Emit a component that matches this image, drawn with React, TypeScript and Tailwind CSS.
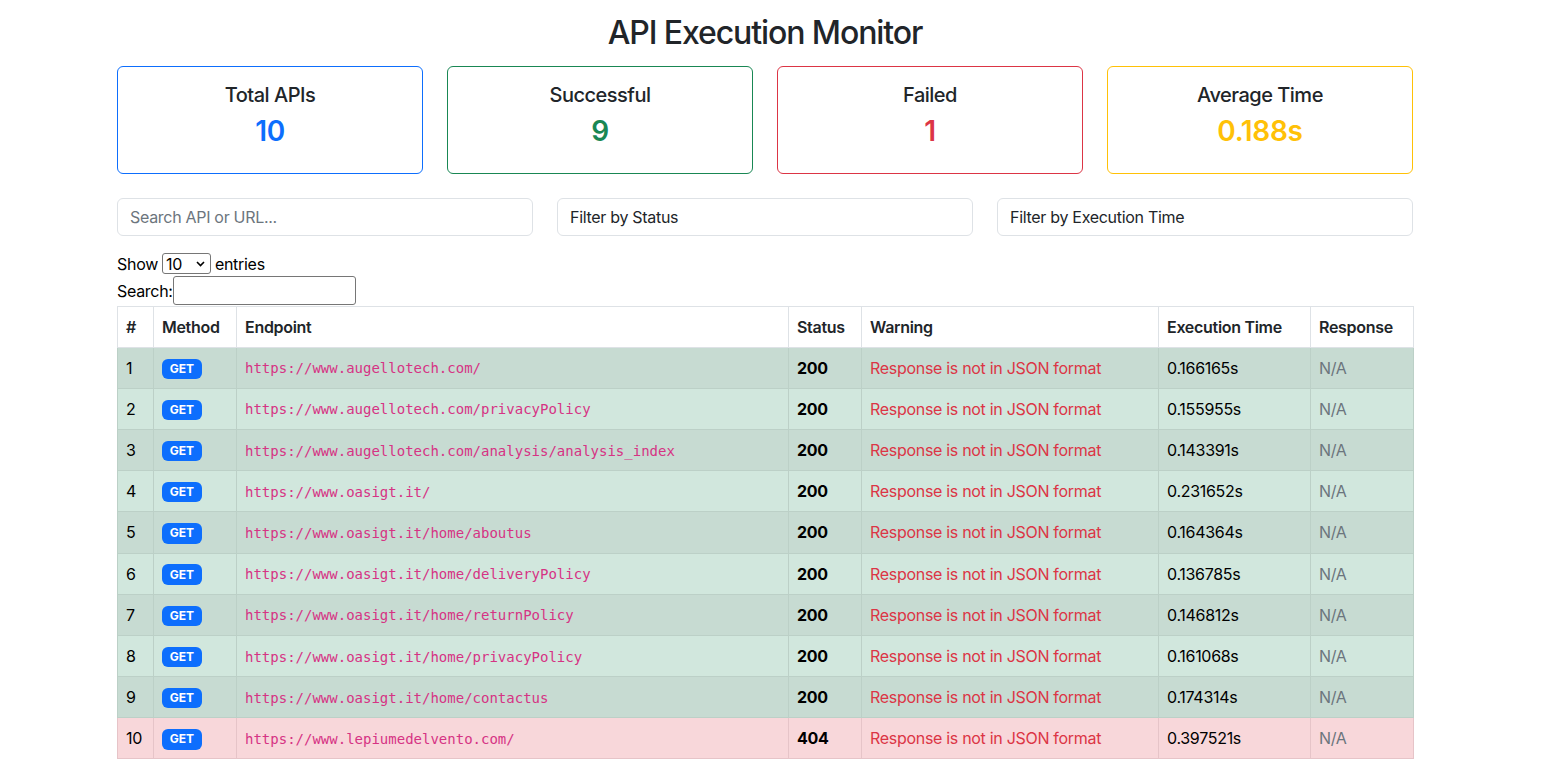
import React from "react";

const rows = [
  { url: "https://www.augellotech.com/", t: "0.166165s", s: "200" },
  { url: "https://www.augellotech.com/privacyPolicy", t: "0.155955s", s: "200" },
  { url: "https://www.augellotech.com/analysis/analysis_index", t: "0.143391s", s: "200" },
  { url: "https://www.oasigt.it/", t: "0.231652s", s: "200" },
  { url: "https://www.oasigt.it/home/aboutus", t: "0.164364s", s: "200" },
  { url: "https://www.oasigt.it/home/deliveryPolicy", t: "0.136785s", s: "200" },
  { url: "https://www.oasigt.it/home/returnPolicy", t: "0.146812s", s: "200" },
  { url: "https://www.oasigt.it/home/privacyPolicy", t: "0.161068s", s: "200" },
  { url: "https://www.oasigt.it/home/contactus", t: "0.174314s", s: "200" },
  { url: "https://www.lepiumedelvento.com/", t: "0.397521s", s: "404" },
];

const cards = [
  { title: "Total APIs", value: "10", border: "border-[#0d6efd]", color: "text-[#0d6efd]" },
  { title: "Successful", value: "9", border: "border-[#198754]", color: "text-[#198754]" },
  { title: "Failed", value: "1", border: "border-[#dc3545]", color: "text-[#dc3545]" },
  { title: "Average Time", value: "0.188s", border: "border-[#ffc107]", color: "text-[#ffc107]" },
];

export default function App() {
  return (
    <div
      className="min-h-screen bg-white text-[#212529] text-base leading-6 tracking-[-0.3px]"
      style={{ fontFamily: "Inter, 'Noto Sans', sans-serif" }}
    >
      <div className="ml-[117px] w-[1296px] pt-[14px]">
        <h2 className="text-center text-[32px] leading-[38px] font-medium mb-[14px] tracking-[-1.1px]">
          API Execution Monitor
        </h2>

        <div className="grid grid-cols-4 gap-6 mb-6">
          {cards.map((c) => (
            <div key={c.title} className={`border ${c.border} rounded-md p-4 text-center`}>
              <div className="text-xl leading-6 font-medium mb-2 tracking-[-0.5px]">{c.title}</div>
              <div className={`text-[28px] leading-[33.6px] font-semibold mb-2 ${c.color}`}>{c.value}</div>
            </div>
          ))}
        </div>

        <div className="grid grid-cols-3 gap-6 mb-4">
          <div className="h-[38px] border border-[#dee2e6] rounded-md px-3 flex items-center text-[#6c757d]">
            Search API or URL...
          </div>
          <div className="h-[38px] border border-[#dee2e6] rounded-md px-3 flex items-center text-[#212529]">
            Filter by Status
          </div>
          <div className="h-[38px] border border-[#dee2e6] rounded-md px-3 flex items-center text-[#212529]">
            Filter by Execution Time
          </div>
        </div>

        <div className="flex items-center h-6 text-black">
          <span>Show</span>
          <div className="mx-1 h-[21px] w-[49px] border border-[#767676] rounded-[3px] flex items-center justify-between pl-[3px] pr-[5px]">
            <span className="leading-none">10</span>
            <svg width="9" height="6" viewBox="0 0 9 6">
              <path d="M1 1l3.5 3.5L8 1" fill="none" stroke="#000" strokeWidth="1.6" />
            </svg>
          </div>
          <span>entries</span>
        </div>
        <div className="flex items-end h-[30px] text-black">
          <span className="leading-6 mb-[3px]">Search:</span>
          <div className="h-[29px] w-[183px] border border-[#767676] rounded-[3px] mb-[1px]" />
        </div>

        <table className="w-[1296px] table-fixed border-collapse">
          <colgroup>
            <col className="w-[36px]" />
            <col className="w-[83px]" />
            <col className="w-[552px]" />
            <col className="w-[73px]" />
            <col className="w-[297px]" />
            <col className="w-[152px]" />
            <col className="w-[103px]" />
          </colgroup>
          <thead>
            <tr className="bg-white">
              {["#", "Method", "Endpoint", "Status", "Warning", "Execution Time", "Response"].map((h) => (
                <th key={h} className="border border-[#dee2e6] px-2 py-2 text-left font-semibold leading-6 text-[#212529]">
                  {h}
                </th>
              ))}
            </tr>
          </thead>
          <tbody>
            {rows.map((r, i) => {
              const danger = r.s === "404";
              const bg = danger ? "bg-[#f8d7da]" : i % 2 === 0 ? "bg-[#c7dbd2]" : "bg-[#d1e7dd]";
              const bd = danger ? "border-[#e6c4c8]" : "border-[#bcd0c7]";
              const td = `border ${bd} px-2 h-[41.2px] leading-6 align-middle`;
              return (
                <tr key={i} className={`${bg} text-black`}>
                  <td className={td}>{i + 1}</td>
                  <td className={td}>
                    <span className="inline-block bg-[#0d6efd] text-white text-[12px] font-bold leading-none px-[7.8px] py-[4.2px] rounded-md align-[1px] tracking-normal">
                      GET
                    </span>
                  </td>
                  <td className={td}>
                    <span
                      className="text-[14px] text-[#d63384] tracking-normal"
                      style={{ fontFamily: "'DejaVu Sans Mono', monospace" }}
                    >
                      {r.url}
                    </span>
                  </td>
                  <td className={`${td} font-bold`}>{r.s}</td>
                  <td className={`${td} text-[#dc3545]`}>Response is not in JSON format</td>
                  <td className={td}>{r.t}</td>
                  <td className={`${td} text-[#6c757d]`}>N/A</td>
                </tr>
              );
            })}
          </tbody>
        </table>
      </div>
    </div>
  );
}
